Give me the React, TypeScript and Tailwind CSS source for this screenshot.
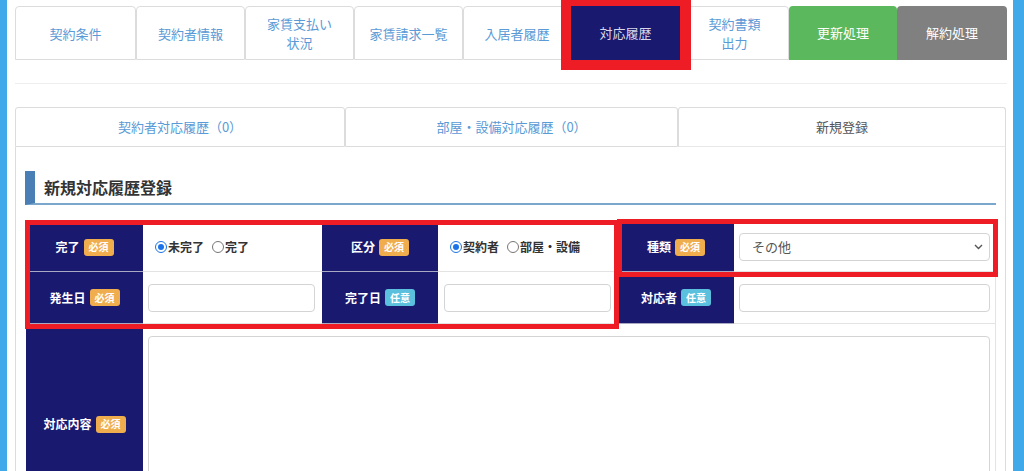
import React from "react";

function Badge({ kind }: { kind: "req" | "opt" }) {
  return kind === "req" ? (
    <span className="ml-[4px] inline-flex h-[17px] items-center rounded-[3px] bg-[#f0ad4e] px-[5px] text-[10px] font-bold leading-none text-white">
      必須
    </span>
  ) : (
    <span className="ml-[4px] inline-flex h-[17px] items-center rounded-[3px] bg-[#5bc0de] px-[5px] text-[10px] font-bold leading-none text-white">
      任意
    </span>
  );
}

function Label({ text, kind, last }: { text: string; kind: "req" | "opt"; last?: boolean }) {
  return (
    <div
      className={
        "flex items-center justify-center bg-[#191970] text-[12px] font-bold text-white " +
        (last ? "" : "border-b border-[#a9a9c4]")
      }
    >
      <span>{text}</span>
      <Badge kind={kind} />
    </div>
  );
}

function Radio({ checked, label }: { checked?: boolean; label: string }) {
  return (
    <span className="mr-[8px] inline-flex items-center">
      <span
        className={
          "mr-[1px] inline-flex h-[12px] w-[12px] items-center justify-center rounded-full border " +
          (checked ? "border-[#1a73e8]" : "border-[#767676]")
        }
      >
        {checked && <span className="h-[6px] w-[6px] rounded-full bg-[#1a73e8]" />}
      </span>
      <span className="text-[12px] font-bold text-[#333]">{label}</span>
    </span>
  );
}

const topTabs = [
  { label: "契約条件", w: "w-[121px]" },
  { label: "契約者情報", w: "w-[109px]" },
  { label: "家賃支払い\n状況", w: "w-[109px]" },
  { label: "家賃請求一覧", w: "w-[109px]" },
  { label: "入居者履歴", w: "w-[108px]" },
];

export default function App() {
  return (
    <div className="flex h-[471px] w-[1024px] overflow-hidden bg-white font-['Noto_Sans_CJK_JP',sans-serif]">
      <div className="w-[7px] shrink-0 bg-[#3fa9ea]" />
      <div className="flex-1 pl-[8px] pr-[6px]">
        {/* top tabs */}
        <div className="mt-[6px] flex h-[54px]">
          {topTabs.map((t) => (
            <div
              key={t.label}
              className={
                t.w +
                " flex items-center justify-center whitespace-pre-line rounded-t-[4px] border border-[#dcdcdc] text-center text-[13px] leading-[19px] text-[#5a9ad6]"
              }
            >
              {t.label}
            </div>
          ))}
          <div className="relative flex w-[109px] items-center justify-center bg-[#191970] text-[13px] text-[#d8d8ea]">
            対応履歴
            <div className="pointer-events-none absolute left-[-10px] top-[-6px] h-[70px] w-[130px] border-b-[10px] border-l-[10px] border-r-[11px] border-t-[6px] border-[#ee1c25]" />
          </div>
          <div className="flex w-[109px] items-center justify-center whitespace-pre-line rounded-t-[4px] border border-[#dcdcdc] text-center text-[13px] leading-[19px] text-[#5a9ad6]">
            {"契約書類\n出力"}
          </div>
          <div className="flex w-[108px] items-center justify-center rounded-t-[4px] bg-[#5cb85c] text-[13px] text-white">
            更新処理
          </div>
          <div className="flex w-[110px] items-center justify-center rounded-t-[4px] bg-[#808080] text-[13px] text-white">
            解約処理
          </div>
        </div>

        <div className="mt-[23px] h-px w-[992px] bg-[#eeeeee]" />

        {/* sub tabs */}
        <div className="mt-[23px] flex h-[40px] w-[991px]">
          <div className="flex w-[330px] items-center justify-center rounded-t-[3px] border border-[#dcdcdc] text-[13px] text-[#5a9ad6]">
            契約者対応履歴（0）
          </div>
          <div className="flex w-[333px] items-center justify-center rounded-t-[3px] border border-[#dcdcdc] text-[13px] text-[#5a9ad6]">
            部屋・設備対応履歴（0）
          </div>
          <div className="flex w-[328px] items-center justify-center rounded-t-[3px] border border-b border-[#dcdcdc] border-b-[#e8e8e8] border-b-dashed text-[13px] text-[#555]">
            新規登録
          </div>
        </div>

        {/* panel */}
        <div className="h-[400px] w-[991px] border-x border-[#dcdcdc] px-[9px] pt-[24px]">
          <div className="flex h-[34px] items-center border-b-2 border-l-[10px] border-b-[#7ba7cc] border-l-[#4a7fb5] pl-[9px] text-[16px] font-bold text-[#333]">
            新規対応履歴登録
          </div>

          <div className="relative ml-[1px] mt-[18px] w-[970px]">
            <div className="grid grid-cols-[117px_179px_116px_180px_116px_262px] grid-rows-[49px_52px_200px] border-r border-[#e3e3e3]">
              {/* row 1 */}
              <Label text="完了" kind="req" />
              <div className="flex items-center border-b border-[#e3e3e3] pl-[12px]">
                <Radio checked label="未完了" />
                <Radio label="完了" />
              </div>
              <Label text="区分" kind="req" />
              <div className="flex items-center border-b border-[#e3e3e3] pl-[12px]">
                <Radio checked label="契約者" />
                <Radio label="部屋・設備" />
              </div>
              <Label text="種類" kind="req" />
              <div className="flex items-center border-b border-[#e3e3e3] pl-[5px]">
                <div className="relative flex h-[28px] w-[251px] items-center rounded-[4px] border border-[#d4d4d4] bg-white pl-[12px] text-[13px] text-[#555]">
                  その他
                  <svg
                    className="absolute right-[6px] top-[10px]"
                    width="9"
                    height="6"
                    viewBox="0 0 9 6"
                    fill="none"
                    stroke="#555"
                    strokeWidth="1.4"
                  >
                    <path d="M1 1l3.5 3.5L8 1" />
                  </svg>
                </div>
              </div>

              {/* row 2 */}
              <Label text="発生日" kind="req" />
              <div className="flex items-center border-b border-[#e3e3e3] pl-[5px]">
                <div className="h-[28px] w-[167px] rounded-[4px] border border-[#d4d4d4] bg-white" />
              </div>
              <Label text="完了日" kind="opt" />
              <div className="flex items-center border-b border-[#e3e3e3] pl-[6px]">
                <div className="h-[28px] w-[167px] rounded-[4px] border border-[#d4d4d4] bg-white" />
              </div>
              <Label text="対応者" kind="opt" />
              <div className="flex items-center border-b border-[#e3e3e3] pl-[5px]">
                <div className="h-[28px] w-[251px] rounded-[4px] border border-[#d4d4d4] bg-white" />
              </div>

              {/* row 3 */}
              <Label text="対応内容" kind="req" last />
              <div className="col-span-5 pl-[5px] pt-[12px]">
                <div className="h-[180px] w-[842px] rounded-[4px] border border-[#d4d4d4] bg-white" />
              </div>
            </div>

            {/* annotation boxes */}
            <div className="pointer-events-none absolute left-[-1px] top-[-3px] h-[109px] w-[594px] border-[5px] border-[#ee1c25]" />
            <div className="pointer-events-none absolute left-[591px] top-[-4px] h-[58px] w-[381px] border-[5px] border-[#ee1c25]" />
          </div>
        </div>
      </div>
      <div className="w-[11px] shrink-0 bg-[#3fa9ea]" />
    </div>
  );
}
